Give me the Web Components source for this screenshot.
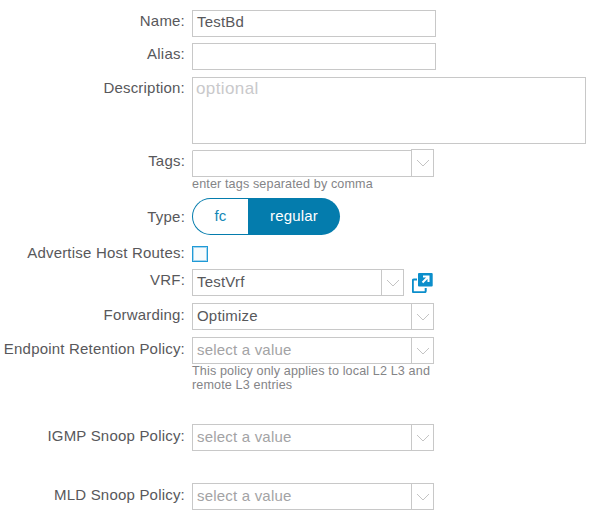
<!DOCTYPE html>
<html>
<head>
<meta charset="utf-8">
<style>
    html, body { margin: 0; background: #fff; }
    body {
        font-family: "Liberation Sans", Arial, sans-serif;
        font-size: 15px;
        letter-spacing: .2px;
        color: #58585b;
    }
    bd-form { padding-top: 10px; }
</style>
</head>
<body>
<bd-form>
    <form-row label="Name:" gap="6"><text-box value="TestBd"></text-box></form-row>
    <form-row label="Alias:" gap="7"><text-box></text-box></form-row>
    <form-row label="Description:" gap="6"><text-box area placeholder="optional"></text-box></form-row>
    <form-row label="Tags:" gap="7">
        <select-box width="242" tags></select-box>
        <small slot="hint">enter tags separated by comma</small>
    </form-row>
    <form-row label="Type:" gap="11" top="10"><type-toggle></type-toggle></form-row>
    <form-row label="Advertise Host Routes:" gap="7" top="-2"><check-box></check-box></form-row>
    <form-row label="VRF:" gap="7">
        <select-box width="212" value="TestVrf"></select-box>
        <open-icon></open-icon>
    </form-row>
    <form-row label="Forwarding:" gap="7" top="3"><select-box value="Optimize"></select-box></form-row>
    <form-row label="Endpoint Retention Policy:" gap="32" top="3">
        <select-box placeholder="select a value"></select-box>
        <small slot="hint">This policy only applies to local L2 L3 and<br>remote L3 entries</small>
    </form-row>
    <form-row label="IGMP Snoop Policy:" gap="32" top="3"><select-box placeholder="select a value"></select-box></form-row>
    <form-row label="MLD Snoop Policy:" top="3"><select-box placeholder="select a value"></select-box></form-row>
</bd-form>

<script>
customElements.define("bd-form", class extends HTMLElement {
    connectedCallback() {
        if (this.shadowRoot) return
        this.attachShadow({mode: "open"}).innerHTML = `
            <style>
                :host { display: block; }
            </style>
            <slot></slot>
        `
    }
})

customElements.define("form-row", class extends HTMLElement {
    connectedCallback() {
        if (this.shadowRoot) return
        this.attachShadow({mode: "open"}).innerHTML = `
            <style>
                :host {
                    display: grid;
                    grid-template-columns: 185px auto;
                    column-gap: 7px;
                    justify-content: start;
                    align-items: start;
                }
                .label {
                    text-align: right;
                    line-height: 18px;
                    margin-top: var(--label-top, 2px);
                    white-space: nowrap;
                }
                .control {
                    display: flex;
                    align-items: center;
                    gap: 8px;
                }
                .hint {
                    grid-column: 2;
                    color: #848487;
                }
                ::slotted(small) {
                    display: block;
                    font-size: 12.6px;
                    line-height: 14px;
                    letter-spacing: .13px;
                }
            </style>
            <div class="label"></div>
            <div class="control"><slot></slot></div>
            <div class="hint"><slot name="hint"></slot></div>
        `
        this.shadowRoot.querySelector(".label").textContent = this.getAttribute("label")
        this.style.marginBottom = (this.getAttribute("gap") || 0) + "px"
        if (this.hasAttribute("top")) this.style.setProperty("--label-top", this.getAttribute("top") + "px")
    }
})

customElements.define("text-box", class extends HTMLElement {
    connectedCallback() {
        if (this.shadowRoot) return
        this.attachShadow({mode: "open"}).innerHTML = `
            <style>
                :host {
                    display: block;
                    box-sizing: border-box;
                    width: 244px;
                    height: 27px;
                    border: 1px solid #c8c8c8;
                    padding: 0 4px;
                    line-height: 22px;
                }
                :host([area]) {
                    width: 394px;
                    height: 67px;
                    padding: 0 3px;
                    font-size: 17px;
                    letter-spacing: .4px;
                    line-height: 22px;
                }
                .ph { color: #c9c9cb; }
            </style>
            <span></span>
        `
        const span = this.shadowRoot.querySelector("span")
        if (this.hasAttribute("placeholder")) {
            span.textContent = this.getAttribute("placeholder")
            span.className = "ph"
        } else {
            span.textContent = this.getAttribute("value") || ""
        }
    }
})

customElements.define("select-box", class extends HTMLElement {
    connectedCallback() {
        if (this.shadowRoot) return
        this.attachShadow({mode: "open"}).innerHTML = `
            <style>
                :host {
                    display: flex;
                    box-sizing: border-box;
                    height: 27px;
                    width: 242px;
                    border: 1px solid #c8c8c8;
                }
                /* the tags arrow sits a pixel above its input */
                :host([tags]) { border-top-color: transparent; }
                :host([tags]) .text { box-shadow: 0 -1px 0 #c8c8c8; }
                :host([tags]) .arrow {
                    margin-top: -2px;
                    border-top: 1px solid #c8c8c8;
                    border-right: 1px solid #c8c8c8;
                    margin-right: -1px;
                }
                .text {
                    flex: 1;
                    padding: 0 4px;
                    line-height: 24px;
                    white-space: nowrap;
                }
                .ph { color: #a3a3a5; }
                .arrow {
                    width: 21px;
                    border-left: 1px solid #c8c8c8;
                    display: flex;
                    align-items: center;
                    justify-content: center;
                }
            </style>
            <div class="text"></div>
            <div class="arrow">
                <svg width="14" height="8" viewBox="0 0 14 8"><path d="M1 1 7 7 13 1" fill="none" stroke="#c4c4c4" stroke-width="1"/></svg>
            </div>
        `
        const text = this.shadowRoot.querySelector(".text")
        if (this.hasAttribute("placeholder")) {
            text.textContent = this.getAttribute("placeholder")
            text.className = "text ph"
        } else {
            text.textContent = this.getAttribute("value") || ""
        }
        if (this.hasAttribute("width")) this.style.width = this.getAttribute("width") + "px"
    }
})

customElements.define("type-toggle", class extends HTMLElement {
    connectedCallback() {
        if (this.shadowRoot) return
        this.attachShadow({mode: "open"}).innerHTML = `
            <style>
                :host {
                    display: flex;
                    box-sizing: border-box;
                    width: 148px;
                    height: 37px;
                    background: #047cad;
                    border-radius: 19px;
                    padding: 1px 0 1px 1px;
                    line-height: 34px;
                    text-align: center;
                }
                .fc {
                    width: 55px;
                    background: #fff;
                    color: #1287b6;
                    border-radius: 18px 0 0 18px;
                }
                .regular { flex: 1; color: #fff; }
            </style>
            <div class="fc">fc</div>
            <div class="regular">regular</div>
        `
    }
})

customElements.define("check-box", class extends HTMLElement {
    connectedCallback() {
        if (this.shadowRoot) return
        this.attachShadow({mode: "open"}).innerHTML = `
            <style>
                :host {
                    display: block;
                    box-sizing: border-box;
                    width: 16px;
                    height: 16px;
                    border: 1px solid #1f9ad6;
                    box-shadow: inset 0 0 0 1px #a5d5ee;
                    background: #f7fbfd;
                }
            </style>
        `
    }
})

customElements.define("open-icon", class extends HTMLElement {
    connectedCallback() {
        if (this.shadowRoot) return
        this.attachShadow({mode: "open"}).innerHTML = `
            <style>
                :host { display: block; width: 21px; height: 20px; }
                svg { display: block; }
            </style>
            <svg width="21" height="20" viewBox="0 0 21 20">
                <rect x="6" y="0" width="14.700" height="13.500" rx="1" fill="#0b8ecb"/>
                <path d="M16 4 10.500 9.500M11 3.500H16.500V9" fill="none" stroke="#fff" stroke-width="2"/>
                <path d="M5 6.500H2A1.200 1.200 0 0 0 .8 7.700V18A1.200 1.200 0 0 0 2 19.200H12.500A1.200 1.200 0 0 0 13.700 18V15" fill="none" stroke="#0b8ecb" stroke-width="2"/>
            </svg>
        `
    }
})
</script>
</body>
</html>
